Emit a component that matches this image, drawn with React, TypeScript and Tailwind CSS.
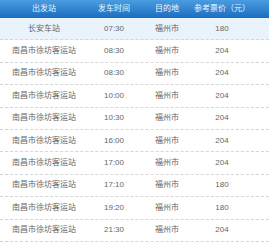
const rows = [
  { from: '长安车站', time: '07:30', to: '福州市', price: '180' },
  { from: '南昌市徐坊客运站', time: '08:30', to: '福州市', price: '204' },
  { from: '南昌市徐坊客运站', time: '08:30', to: '福州市', price: '204' },
  { from: '南昌市徐坊客运站', time: '10:00', to: '福州市', price: '204' },
  { from: '南昌市徐坊客运站', time: '10:30', to: '福州市', price: '204' },
  { from: '南昌市徐坊客运站', time: '16:00', to: '福州市', price: '204' },
  { from: '南昌市徐坊客运站', time: '17:00', to: '福州市', price: '204' },
  { from: '南昌市徐坊客运站', time: '17:10', to: '福州市', price: '180' },
  { from: '南昌市徐坊客运站', time: '19:20', to: '福州市', price: '180' },
  { from: '南昌市徐坊客运站', time: '21:30', to: '福州市', price: '204' },
];

const cols = 'grid grid-cols-[88px_52px_54px_56px_1fr] items-center';

export default function App() {
  return (
    <div
      className="w-[269px] h-[242px] overflow-hidden bg-white text-[8px] text-[#666]"
      style={{ fontFamily: '"Liberation Sans", "Noto Sans CJK SC", sans-serif' }}
    >
      <div className={`${cols} h-[18px] bg-gradient-to-b from-[#4a9de0] to-[#1a6dbf] text-[#eef5fc]`}>
        <div className="text-center">出发站</div>
        <div className="text-center">发车时间</div>
        <div className="pl-[15px]">目的地</div>
        <div className="text-center whitespace-nowrap">参考票价（元）</div>
        <div />
      </div>
      {rows.map((r, i) => (
        <div
          key={i}
          className={`${cols} h-[22.4px] border-b border-dashed border-[#d6d6d6] ${i === 0 ? 'bg-[#eaf3fb]' : ''}`}
        >
          <div className="text-center">{r.from}</div>
          <div className="text-center">{r.time}</div>
          <div className="pl-[15px]">{r.to}</div>
          <div className="text-center">{r.price}</div>
          <div />
        </div>
      ))}
    </div>
  );
}
